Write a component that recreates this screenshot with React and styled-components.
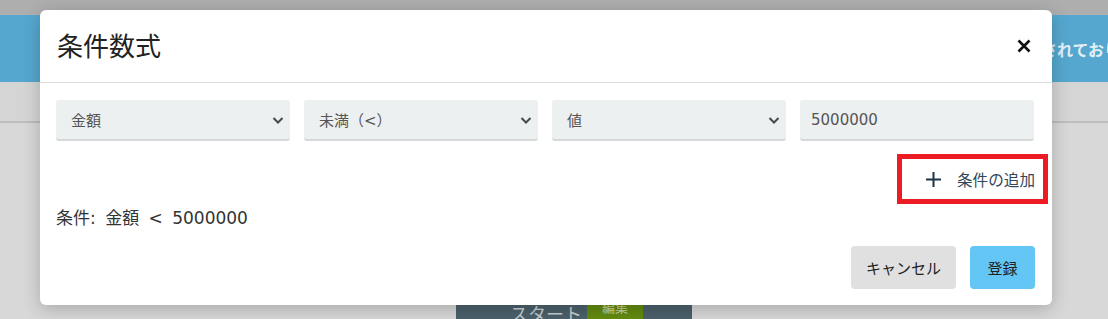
import React from 'react'
import styled, { createGlobalStyle } from 'styled-components'

const GlobalStyle = createGlobalStyle`
  html, body {
    margin: 0;
    padding: 0;
    background: #d8d8d8;
    font-family: "DejaVu Sans", "Noto Sans CJK JP", sans-serif;
  }
`

const Page = styled.div`
  position: relative;
  width: 1108px;
  height: 319px;
  overflow: hidden;
  background: #d8d8d8;
`

const TopStrip = styled.div`
  height: 15px;
  background: #aeaeae;
`

const Banner = styled.div`
  height: 67px;
  background: #55a7cf;
  display: flex;
  align-items: center;
  padding-left: 1041px;
  white-space: nowrap;
  color: #e3eff6;
  font-family: "Noto Sans CJK JP", sans-serif;
  font-size: 16px;
  font-weight: 700;
`

const SubBar = styled.div`
  height: 39px;
  background: #d5d5d5;
  border-bottom: 2px solid #bebebe;
`

const Canvas = styled.div`
  height: 200px;
`

const Node = styled.div`
  position: absolute;
  left: 456px;
  top: 262px;
  width: 236px;
  height: 80px;
  background: #4c616c;
  display: flex;
  align-items: flex-start;
  padding-left: 54px;
  box-sizing: border-box;
  gap: 5px;
  font-family: "Noto Sans CJK JP", sans-serif;
`

const NodeLabel = styled.span`
  color: #c7d0d5;
  font-size: 18px;
  line-height: 26px;
  margin-top: 38px;
`

const NodeTag = styled.span`
  background: #648b10;
  color: #c4d29b;
  width: 56px;
  font-size: 13px;
  line-height: 16px;
  padding-top: 37px;
  align-self: stretch;
  display: flex;
  justify-content: center;
`

const Modal = styled.div`
  position: absolute;
  left: 40px;
  top: 10px;
  width: 1012px;
  height: 295px;
  background: #fff;
  border-radius: 6px;
  box-shadow: 0 4px 18px rgba(0, 0, 0, 0.22);
  display: flex;
  flex-direction: column;
  z-index: 2;
`

const Header = styled.div`
  height: 72px;
  border-bottom: 1px solid #dcdcdc;
  display: flex;
  align-items: center;
  justify-content: space-between;
  padding: 0 20px 0 17px;
`

const Title = styled.h2`
  margin: 0;
  font-family: "Noto Sans CJK JP", sans-serif;
  font-size: 26px;
  font-weight: 400;
  color: #222;
  margin-top: -4px;
`

const Close = styled.button`
  border: 0;
  background: none;
  padding: 0;
  width: 16px;
  height: 16px;
  display: flex;
  margin-top: -1px;
`

const Body = styled.div`
  padding: 17px 18px 16px 16px;
  display: flex;
  flex-direction: column;
`

const FieldRow = styled.div`
  display: grid;
  grid-template-columns: repeat(4, 234px);
  gap: 14px;
`

const Field = styled.div`
  height: 41px;
  box-sizing: border-box;
  background: #edf0f1;
  border-bottom: 2px solid #d4d8da;
  border-radius: 3px;
  display: flex;
  align-items: center;
  justify-content: space-between;
  padding: 0 6px 0 ${p => (p.$input ? 11 : 15)}px;
  font-size: 15px;
  color: #555;
`

const AddRow = styled.div`
  display: flex;
  justify-content: flex-end;
  margin-top: 18px;
  margin-right: -9px;
`

const AddButton = styled.button`
  height: 40px;
  border: 0;
  background: #fff;
  outline: 5px solid #ed1c24;
  display: flex;
  align-items: center;
  gap: 15px;
  padding: 0 8px 0 23px;
  font-family: "Noto Sans CJK JP", sans-serif;
  font-size: 15.6px;
  color: #33495a;
`

const Summary = styled.div`
  margin-top: 9px;
  font-size: 17px;
  line-height: 21px;
  color: #333;
  word-spacing: 4px;
`

const Footer = styled.div`
  display: flex;
  justify-content: flex-end;
  gap: 14px;
  margin-top: 17px;
  margin-right: -1px;
`

const Button = styled.button`
  height: 43px;
  border: 0;
  border-radius: 4px;
  padding: 0 15px;
  background: ${p => (p.$primary ? '#64c6f4' : '#e0e0e0')};
  color: #222;
  font-family: "Noto Sans CJK JP", sans-serif;
  font-size: 15px;
  min-width: ${p => (p.$primary ? 65 : 105)}px;
`

const Chevron = () => (
  <svg width="12" height="12" viewBox="0 0 12 12">
    <path d="M1.5 4 L6 8.5 L10.5 4" fill="none" stroke="#4a4a4a" strokeWidth="2" />
  </svg>
)

const selects = ['金額', '未満（<）', '値']

export default function App() {
  return (
    <>
      <GlobalStyle />
      <Page>
        <TopStrip />
        <Banner>されておりません</Banner>
        <SubBar />
        <Canvas />
        <Node>
          <NodeLabel>スタート</NodeLabel>
          <NodeTag>編集</NodeTag>
        </Node>
        <Modal>
          <Header>
            <Title>条件数式</Title>
            <Close aria-label="close">
              <svg width="16" height="16" viewBox="0 0 16 16">
                <path d="M2.5 2.5 L13.5 13.5 M13.5 2.5 L2.5 13.5" stroke="#111" strokeWidth="2.6" />
              </svg>
            </Close>
          </Header>
          <Body>
            <FieldRow>
              {selects.map(s => (
                <Field key={s}>
                  <span>{s}</span>
                  <Chevron />
                </Field>
              ))}
              <Field $input>5000000</Field>
            </FieldRow>
            <AddRow>
              <AddButton>
                <svg width="17" height="17" viewBox="0 0 17 17">
                  <path d="M8.5 1 V16 M1 8.5 H16" stroke="#1d3446" strokeWidth="2" />
                </svg>
                条件の追加
              </AddButton>
            </AddRow>
            <Summary>条件: 金額 &lt; 5000000</Summary>
            <Footer>
              <Button>キャンセル</Button>
              <Button $primary>登録</Button>
            </Footer>
          </Body>
        </Modal>
      </Page>
    </>
  )
}
